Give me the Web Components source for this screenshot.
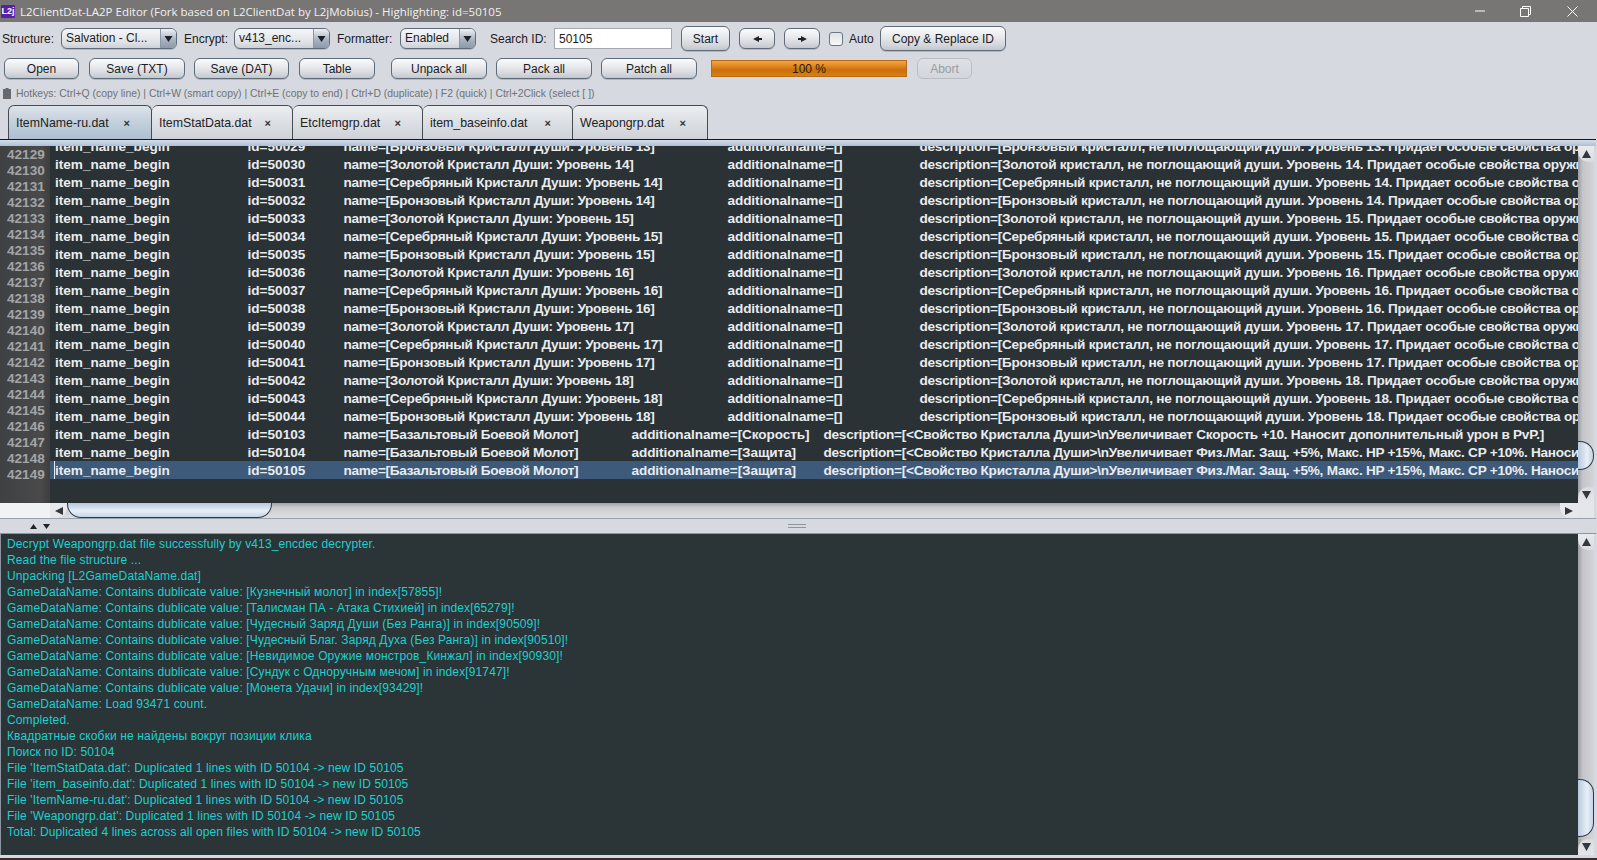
<!DOCTYPE html>
<html lang="ru"><head><meta charset="utf-8"><title>L2ClientDat</title>
<style>
html,body{margin:0;padding:0;background:#d6d9df;overflow:hidden}
body{font:12px "Liberation Sans",Arial,sans-serif;color:#1a1a1a}
</style></head><body>
<app-window></app-window>
<script>
function el(name,attrs={},text){const e=document.createElement(name);for(const k in attrs)e.setAttribute(k,attrs[k]);if(text!=null)e.textContent=text;return e;}
const btnGrad='linear-gradient(#fbfcfd 0%,#e6e8ec 45%,#d2d5da 80%,#c3c6cc 100%)';

class UiButton extends HTMLElement{constructor(){super();this.attachShadow({mode:'open'}).innerHTML=`<style>
:host{display:inline-flex;align-items:center;justify-content:center;box-sizing:border-box;height:21px;border:1px solid #5f6b78;border-radius:6px;background:${btnGrad};font:12px "Liberation Sans",sans-serif;color:#1c1c1c;flex:none;white-space:nowrap;box-shadow:0 1px 0 #b4b8bf}
:host([disabled]){color:#9a9da2;border-color:#b9bcc2;background:linear-gradient(#dde0e5,#d3d6dc);box-shadow:none}
:host([tall]){height:25px}
</style><slot></slot>`;}}
customElements.define('ui-button',UiButton);

class UiCombo extends HTMLElement{constructor(){super();this.attachShadow({mode:'open'}).innerHTML=`<style>
:host{display:inline-flex;box-sizing:border-box;height:21px;border:1px solid #5f6b78;border-radius:6px;overflow:hidden;flex:none;background:linear-gradient(#f4f6f8,#dfe2e7 70%,#cdd0d6);font:12px "Liberation Sans",sans-serif;color:#1c1c1c;box-shadow:0 1px 0 #b4b8bf}
.t{flex:1;padding:0 0 2px 4px;display:flex;align-items:center;white-space:nowrap;overflow:hidden}
.a{width:15px;flex:none;border-left:1px solid #8a96a5;background:linear-gradient(#eef1f5,#aab4c2 55%,#8d99a9);display:flex;align-items:center;justify-content:center}
</style><div class="t"><slot></slot></div><div class="a"><svg width="9" height="6" viewBox="0 0 9 6"><path d="M0.5 0H8.5L4.5 6Z" fill="#1e2227"/></svg></div>`;}}
customElements.define('ui-combo',UiCombo);

class UiTab extends HTMLElement{constructor(){super();this.attachShadow({mode:'open'}).innerHTML=`<style>
:host{display:flex;align-items:center;box-sizing:border-box;height:34px;padding-left:7px;border:1px solid #454b52;border-bottom:none;border-left:none;border-radius:6px 6px 0 0;font:12.35px "Liberation Sans",sans-serif;color:#222;background:linear-gradient(#eceef1,#d9dce1 60%,#cfd2d8);flex:none;white-space:nowrap}
:host([active]){border-left:1px solid #454b52;background:linear-gradient(#dde3ea,#c2cfdc 50%,#aebfd2)}
.x{font-size:11px;font-weight:bold;margin-left:auto;margin-right:var(--xr,16px);color:#333}
</style><slot></slot><span class="x">×</span>`;}}
customElements.define('ui-tab',UiTab);

class UiProgress extends HTMLElement{constructor(){super();this.attachShadow({mode:'open'}).innerHTML=`<style>
:host{display:flex;align-items:center;justify-content:center;box-sizing:border-box;height:17px;border:1px solid #b86a14;background:linear-gradient(#f2a445,#e8902a 25%,#c96f0c 60%,#d9820f 100%);font:12px "Liberation Sans",sans-serif;color:#2a1a08;flex:none}
</style><slot></slot>`;}}
customElements.define('ui-progress',UiProgress);

class ScrollBar extends HTMLElement{constructor(){super();const v=this.getAttribute('dir')!=='h';
const r=this.attachShadow({mode:'open'});
const before=this.getAttribute('before')||0,size=this.getAttribute('size')||30;
r.innerHTML=v?`<style>
:host{display:flex;flex-direction:column;width:16px;flex:none;background:linear-gradient(90deg,#9a9da1,#c4c6ca 30%,#d2d4d8);box-sizing:border-box}
.b{height:16px;flex:none;background:linear-gradient(#e9ebee,#d9dbdf);border-radius:0 0 0 10px;display:flex;align-items:center;justify-content:center}
.d{border-radius:10px 0 0 0;background:linear-gradient(#d9dbdf,#e4e6e9)}
.s{flex:none}.f{flex:1}
.th{flex:none;box-sizing:border-box;width:16px;border:1px solid #2c3a48;border-left:none;border-radius:0 14px 14px 0;background:linear-gradient(90deg,#b8c8dc,#e8eff7 60%,#c3d3e6)}
</style><div class="b"><svg width="9" height="8" viewBox="0 0 9 8"><path d="M4.5 0L9 8H0Z" fill="#33383e"/></svg></div><div class="s" style="height:${before}px"></div><div class="th" style="height:${size}px"></div><div class="f"></div><div class="b d"><svg width="9" height="8" viewBox="0 0 9 8"><path d="M0 0H9L4.5 8Z" fill="#33383e"/></svg></div>`
:`<style>
:host{display:flex;height:15px;flex:1;background:linear-gradient(#9fa2a6,#c9cbcf 30%,#dcdee1);box-sizing:border-box;align-items:stretch}
.b{width:17px;flex:none;background:#e6e8eb;display:flex;align-items:center;justify-content:center}
.l{border-radius:0 0 10px 0}.r{border-radius:0 0 0 10px;width:18px}
.s{flex:none}.f{flex:1}
.th{flex:none;box-sizing:border-box;height:15px;border:1px solid #2c3a48;border-top:none;border-radius:0 0 14px 14px;background:linear-gradient(#b4c6dc,#e8eff7 55%,#c5d5e7)}
</style><div class="b l"><svg width="8" height="8" viewBox="0 0 8 8"><path d="M0 4L8 0V8Z" fill="#33383e"/></svg></div><div class="s" style="width:${before}px"></div><div class="th" style="width:${size}px"></div><div class="f"></div><div class="b r"><svg width="8" height="8" viewBox="0 0 8 8"><path d="M8 4L0 0V8Z" fill="#33383e"/></svg></div>`;
}}
customElements.define('scroll-bar',ScrollBar);

class TitleBar extends HTMLElement{constructor(){super();this.attachShadow({mode:'open'}).innerHTML=`<style>
:host{display:flex;align-items:center;height:22px;background:#787675;color:#f1f1f1;flex:none;font:11.5px "Open Sans",sans-serif}
.i{width:14px;height:13px;margin:0 5px 0 1px;background:#5a1fa8;color:#fff;font:bold 9px "Liberation Sans",sans-serif;display:flex;align-items:center;justify-content:center;border-radius:1px;flex:none}
.t{flex:1;white-space:nowrap}
svg{display:block;flex:none}
</style><div class="i">L2j</div><div class="t"><slot></slot></div>
<svg width="10" height="2" viewBox="0 0 10 2" style="margin-right:35px"><path d="M0 1H10" stroke="#fff" stroke-width="1"/></svg>
<svg width="11" height="11" viewBox="0 0 11 11" style="margin-right:36px"><path d="M0.5 2.5H8.5V10.5H0.5ZM2.5 2.5V0.5H10.5V8.5H8.5" fill="none" stroke="#fff"/></svg>
<svg width="11" height="11" viewBox="0 0 11 11" style="margin-right:19px"><path d="M0.5 0.5L10.5 10.5M10.5 0.5L0.5 10.5" stroke="#fff" stroke-width="1"/></svg>`;}}
customElements.define('title-bar',TitleBar);

class ToolBar extends HTMLElement{constructor(){super();const r=this.attachShadow({mode:'open'});r.innerHTML=`<style>
:host{display:block;flex:none;font:12px "Liberation Sans",sans-serif;color:#1c1c1c}
.row{display:flex;align-items:center}
.r1{height:31px;padding-top:1px}.r2{height:29px}
.lb{flex:none;white-space:nowrap}
.cb{width:14px;height:14px;box-sizing:border-box;border:1px solid #6c7783;border-radius:3px;background:linear-gradient(#dfe2e6,#f7f8f9);flex:none}
.inp{box-sizing:border-box;width:118px;height:21px;background:#fff;border:1px solid #a4a8ae;padding:0 4px;display:flex;align-items:center;flex:none}
</style>
<div class="row r1">
<span class="lb" style="margin-left:2px;width:59px">Structure:</span><ui-combo style="width:116px">Salvation - Cl...</ui-combo>
<span class="lb" style="margin-left:7px;width:50px">Encrypt:</span><ui-combo style="width:96px">v413_enc...</ui-combo>
<span class="lb" style="margin-left:7px;width:63px">Formatter:</span><ui-combo style="width:76px">Enabled</ui-combo>
<span class="lb" style="margin-left:14px;width:64px">Search ID:</span><div class="inp">50105</div>
<ui-button tall style="margin-left:9px;width:49px">Start</ui-button>
<ui-button style="margin-left:9px;width:36px"><svg width="9" height="6" viewBox="0 0 9 6"><path d="M0 3L6 0V2H9V4H6V6Z" fill="#222"/></svg></ui-button>
<ui-button style="margin-left:9px;width:36px"><svg width="9" height="6" viewBox="0 0 9 6"><path d="M9 3L3 0V2H0V4H3V6Z" fill="#222"/></svg></ui-button>
<div class="cb" style="margin-left:9px"></div><span class="lb" style="margin-left:6px;width:31px">Auto</span>
<ui-button tall style="width:126px">Copy &amp; Replace ID</ui-button>
</div>
<div class="row r2">
<ui-button style="margin-left:4px;width:75px">Open</ui-button>
<ui-button style="margin-left:10px;width:96px">Save (TXT)</ui-button>
<ui-button style="margin-left:9px;width:95px">Save (DAT)</ui-button>
<ui-button style="margin-left:10px;width:76px">Table</ui-button>
<ui-button style="margin-left:16px;width:96px">Unpack all</ui-button>
<ui-button style="margin-left:9px;width:96px">Pack all</ui-button>
<ui-button style="margin-left:9px;width:96px">Patch all</ui-button>
<ui-progress style="margin-left:14px;width:196px">100 %</ui-progress>
<ui-button disabled style="margin-left:10px;width:55px">Abort</ui-button>
</div>`;}}
customElements.define('tool-bar',ToolBar);

class HintBar extends HTMLElement{constructor(){super();this.attachShadow({mode:'open'}).innerHTML=`<style>
:host{display:flex;align-items:center;height:15px;margin-top:3px;flex:none;font:10.4px "Liberation Sans",sans-serif;color:#6f7277;white-space:nowrap;padding-left:3px}
svg{margin-right:5px;flex:none}
</style><svg width="8" height="11" viewBox="0 0 8 11"><path d="M0 1H2.5V0H5.5V1H8V11H0Z" fill="#66696d"/></svg><slot></slot>`;}}
customElements.define('hint-bar',HintBar);

class TabStrip extends HTMLElement{constructor(){super();this.attachShadow({mode:'open'}).innerHTML=`<style>
:host{display:block;flex:none;margin-top:4px}
.tabs{display:flex;height:34px;padding-left:8px}
.band{height:7px;box-sizing:border-box;border-top:1px solid #0c1830;margin-right:1px;background:linear-gradient(#d5deea,#aebfd3)}
</style><div class="tabs">
<ui-tab active style="width:144px;--xr:21px">ItemName-ru.dat</ui-tab>
<ui-tab style="width:141px;--xr:21px">ItemStatData.dat</ui-tab>
<ui-tab style="width:130px;--xr:21px">EtcItemgrp.dat</ui-tab>
<ui-tab style="width:150px;--xr:21px">item_baseinfo.dat</ui-tab>
<ui-tab style="width:135px;--xr:21px">Weapongrp.dat</ui-tab>
</div><div class="band"></div>`;}}
customElements.define('tab-strip',TabStrip);

class CodeEditor extends HTMLElement{constructor(){super();const r=this.attachShadow({mode:'open'});r.innerHTML=`<style>
:host{display:flex;flex-direction:column;flex:none;height:372px;font:bold 13.6px "Liberation Sans",sans-serif;color:#e9ecee}
.main{display:flex;height:357px;background:#2b3235;margin-right:3px}
.gut{width:50px;flex:none;background:linear-gradient(90deg,#3f4042,#4a4a4b 80%,#3e3e40);color:#a3a5a7;overflow:hidden}
.gut div{height:16px;line-height:16px;padding-left:7px}
.gut div:first-child{margin-top:1px}
.vp{flex:1;overflow:hidden;min-width:0}
.in{margin-top:-9px}
.r{display:flex;height:18px;line-height:19px;white-space:nowrap;padding-left:5px}
.r.sel{background:#3d5a7b}
.r.sel span:first-child{box-shadow:-1px 0 0 #e8e8e8}
.r span{flex:none}
.a{width:192.5px}.b{width:96px}
.c{width:384px;letter-spacing:-.28px}.d{width:192px;letter-spacing:-.1px}
.c.k{width:288px}.d.k{width:192px}
.e{letter-spacing:-.25px}
.bot{display:flex;height:15px;margin-right:3px}
.corner{width:50px;flex:none;background:#f1f2f3}
.corner2{width:16px;flex:none;background:#e4e6e9}
</style><div class="main"><div class="gut"></div><div class="vp"><div class="in"></div></div><scroll-bar before="279" size="29"></scroll-bar></div>
<div class="bot"><div class="corner"></div><scroll-bar dir="h" before="0" size="205"></scroll-bar><div class="corner2"></div></div>`;
const g=r.querySelector('.gut'),inn=r.querySelector('.in');
for(let i=42129;i<=42149;i++){g.appendChild(el('div',{},String(i)));}
const rows=[];
const kr=['Золотой','Серебряный','Бронзовый'];
rows.push([50029,`name=[Бронзовый Кристалл Души: Уровень 13]`,`additionalname=[]`,`description=[Бронзовый кристалл, не поглощающий души. Уровень 13. Придает особые свойства оружию`,false]);
let id=50030;
for(let lv=14;lv<=18;lv++)for(let k=0;k<3;k++){rows.push([id++,`name=[${kr[k]} Кристалл Души: Уровень ${lv}]`,`additionalname=[]`,`description=[${kr[k]} кристалл, не поглощающий души. Уровень ${lv}. Придает особые свойства оружию`,false]);}
rows.push([50103,'name=[Базальтовый Боевой Молот]','additionalname=[Скорость]','description=[<Свойство Кристалла Души>\\nУвеличивает Скорость +10. Наносит дополнительный урон в PvP.]',true]);
rows.push([50104,'name=[Базальтовый Боевой Молот]','additionalname=[Защита]','description=[<Свойство Кристалла Души>\\nУвеличивает Физ./Маг. Защ. +5%, Макс. HP +15%, Макс. CP +10%. Наносит',true]);
rows.push([50105,'name=[Базальтовый Боевой Молот]','additionalname=[Защита]','description=[<Свойство Кристалла Души>\\nУвеличивает Физ./Маг. Защ. +5%, Макс. HP +15%, Макс. CP +10%. Наносит',true]);
rows.forEach((x,i)=>{const d=el('div',{class:'r'+(i===rows.length-1?' sel':'')});
d.appendChild(el('span',{class:'a'},'item_name_begin'));
d.appendChild(el('span',{class:'b'},'id='+x[0]));
d.appendChild(el('span',{class:'c'+(x[4]?' k':'')},x[1]));
d.appendChild(el('span',{class:'d'+(x[4]?' k':'')},x[2]));
d.appendChild(el('span',{class:'e'},x[3]));inn.appendChild(d);});
}}
customElements.define('code-editor',CodeEditor);

class SplitBar extends HTMLElement{constructor(){super();this.attachShadow({mode:'open'}).innerHTML=`<style>
:host{display:flex;align-items:center;height:16px;flex:none;box-sizing:border-box;border-top:1px solid #9aa3ad;border-bottom:1px solid #8d96a0;background:#d6d9df;margin-right:1px}
.l{display:flex;gap:6px;margin-left:30px}
.g{width:18px;height:4px;margin-left:738px;border-top:1px solid #8f959c;border-bottom:1px solid #8f959c;box-sizing:border-box}
</style><div class="l"><svg width="7" height="5" viewBox="0 0 7 5"><path d="M3.5 0L7 5H0Z" fill="#222"/></svg><svg width="7" height="5" viewBox="0 0 7 5"><path d="M0 0H7L3.5 5Z" fill="#222"/></svg></div><div class="g"></div>`;}}
customElements.define('split-bar',SplitBar);

class LogPanel extends HTMLElement{constructor(){super();const r=this.attachShadow({mode:'open'});r.innerHTML=`<style>
:host{display:flex;height:321px;flex:none;margin-right:3px;background:#2b3437;font:12px "Liberation Sans",sans-serif;color:#20cfcf;border-left:1px solid #8d96a0;box-sizing:border-box}
.t{flex:1;padding:2px 0 0 6px;overflow:hidden;white-space:pre;letter-spacing:.13px}
.t div{height:16px;line-height:16px}
</style><div class="t"></div><scroll-bar before="229" size="58"></scroll-bar>`;
const lines=["Decrypt Weapongrp.dat file successfully by v413_encdec decrypter.","Read the file structure ...","Unpacking [L2GameDataName.dat]",
"GameDataName: Contains dublicate value: [Кузнечный молот] in index[57855]!",
"GameDataName: Contains dublicate value: [Талисман ПА - Атака Стихией] in index[65279]!",
"GameDataName: Contains dublicate value: [Чудесный Заряд Души (Без Ранга)] in index[90509]!",
"GameDataName: Contains dublicate value: [Чудесный Благ. Заряд Духа (Без Ранга)] in index[90510]!",
"GameDataName: Contains dublicate value: [Невидимое Оружие монстров_Кинжал] in index[90930]!",
"GameDataName: Contains dublicate value: [Сундук с Одноручным мечом] in index[91747]!",
"GameDataName: Contains dublicate value: [Монета Удачи] in index[93429]!",
"GameDataName: Load 93471 count.","Completed.","Квадратные скобки не найдены вокруг позиции клика","Поиск по ID: 50104",
"File 'ItemStatData.dat': Duplicated 1 lines with ID 50104 -> new ID 50105",
"File 'item_baseinfo.dat': Duplicated 1 lines with ID 50104 -> new ID 50105",
"File 'ItemName-ru.dat': Duplicated 1 lines with ID 50104 -> new ID 50105",
"File 'Weapongrp.dat': Duplicated 1 lines with ID 50104 -> new ID 50105",
"Total: Duplicated 4 lines across all open files with ID 50104 -> new ID 50105"];
const t=r.querySelector('.t');lines.forEach(l=>t.appendChild(el('div',{},l)));
}}
customElements.define('log-panel',LogPanel);

class AppWindow extends HTMLElement{constructor(){super();this.attachShadow({mode:'open'}).innerHTML=`<style>
:host{display:flex;flex-direction:column;width:1597px;height:860px;overflow:hidden;background:#d6d9df}
.end{flex:1;border-bottom:2px solid #3a2a2a}
</style><title-bar>L2ClientDat-LA2P Editor (Fork based on L2ClientDat by L2jMobius) - Highlighting: id=50105</title-bar>
<tool-bar></tool-bar>
<hint-bar>Hotkeys: Ctrl+Q (copy line) | Ctrl+W (smart copy) | Ctrl+E (copy to end) | Ctrl+D (duplicate) | F2 (quick) | Ctrl+2Click (select [ ])</hint-bar>
<tab-strip></tab-strip><code-editor></code-editor><split-bar></split-bar><log-panel></log-panel><div class="end"></div>`;}}
customElements.define('app-window',AppWindow);
</script>
</body></html>
